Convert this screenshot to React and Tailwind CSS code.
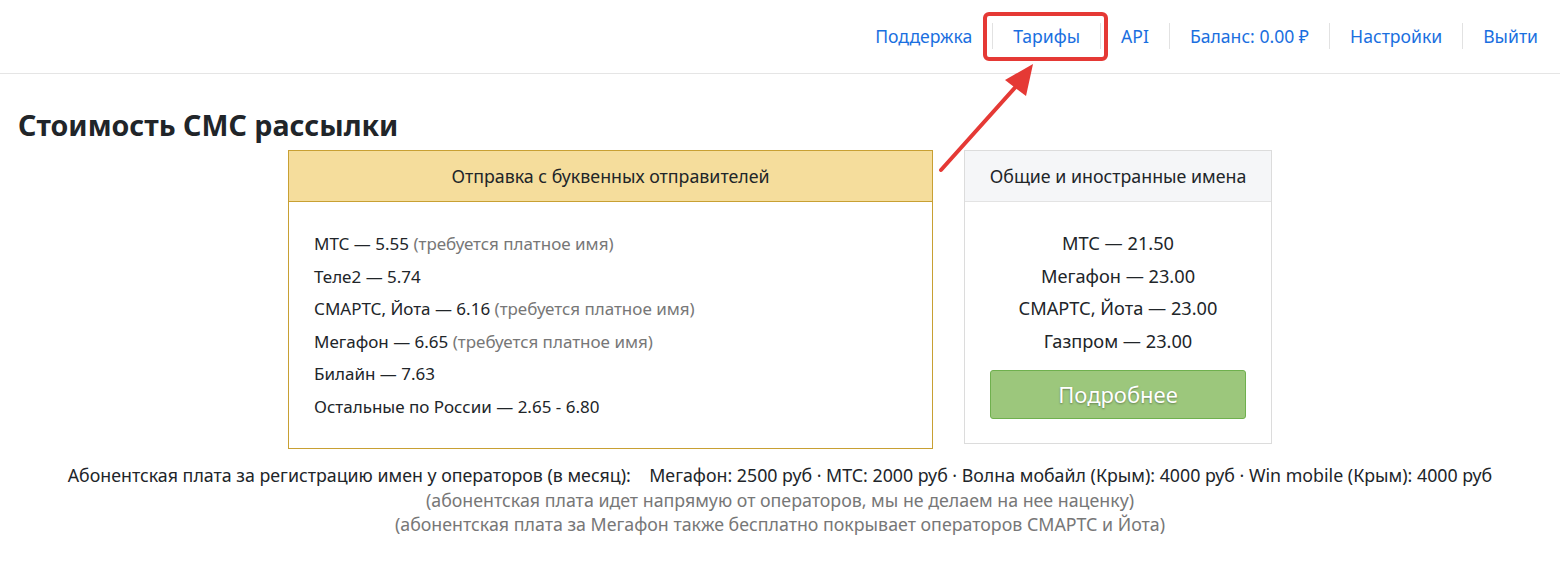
const NAV = ["Поддержка", "Тарифы", "API", "Баланс: 0.00 ₽", "Настройки", "Выйти"];

const LETTER = [
  { name: "МТС — 5.55", note: "(требуется платное имя)" },
  { name: "Теле2 — 5.74" },
  { name: "СМАРТС, Йота — 6.16", note: "(требуется платное имя)" },
  { name: "Мегафон — 6.65", note: "(требуется платное имя)" },
  { name: "Билайн — 7.63" },
  { name: "Остальные по России — 2.65 - 6.80" },
];

const COMMON = ["МТС — 21.50", "Мегафон — 23.00", "СМАРТС, Йота — 23.00", "Газпром — 23.00"];

export default function App() {
  return (
    <div className="relative min-h-[580px] bg-white font-['Noto_Sans',sans-serif] text-[#212529]">
      {/* ── Header ── */}
      <header className="flex h-[74px] items-center justify-end border-b border-[#e5e5e5] pr-[22px]">
        <nav className="flex items-center text-[17.6px] text-[#1a6fe0]">
          {NAV.map((item, i) => (
            <div key={item} className="flex items-center">
              {i > 0 && <span className="mx-[20px] h-[26px] w-px bg-[#e2e2e2]" />}
              {item === "Тарифы" ? (
                <span className="relative">
                  <a href="#" className="hover:underline">{item}</a>
                  <span className="pointer-events-none absolute -top-[11px] -bottom-[11px] -left-[30px] -right-[28px] rounded-[6px] border-[4px] border-[#e53935]" />
                </span>
              ) : (
                <a href="#" className="hover:underline">{item}</a>
              )}
            </div>
          ))}
        </nav>
      </header>

      {/* ── Title ── */}
      <h1 className="ml-[18px] mt-[33px] text-[28.6px] font-bold leading-[36px] text-[#212529]">
        Стоимость СМС рассылки
      </h1>

      {/* ── Cards ── */}
      <div className="mt-[7px] flex items-start justify-center gap-[31px]">
        <div className="w-[645px] border border-[#c8a033]">
          <div className="flex h-[51px] items-center justify-center border-b border-[#c8a033] bg-[#f5dd9c] text-[17.8px]">
            Отправка с буквенных отправителей
          </div>
          <ul className="flex flex-col gap-[6px] px-[25px] pb-[28px] pt-[29px] text-[17px] leading-[26.5px]">
            {LETTER.map((row) => (
              <li key={row.name}>
                {row.name}
                {row.note && <span className="text-[#777]"> {row.note}</span>}
              </li>
            ))}
          </ul>
        </div>

        <div className="w-[308px] border border-[#dcdcdc]">
          <div className="flex h-[51px] items-center justify-center border-b border-[#e3e3e3] bg-[#f5f6f8] text-[17.8px]">
            Общие и иностранные имена
          </div>
          <div className="flex flex-col items-center px-[25px] pb-[24px] pt-[28px]">
            <ul className="flex flex-col items-center gap-[6px] text-[18.2px] leading-[26.5px]">
              {COMMON.map((row) => (
                <li key={row}>{row}</li>
              ))}
            </ul>
            <button className="mt-[16px] flex h-[49px] w-full items-center justify-center rounded-[3px] border border-[#6fb04e] bg-[#9cc77c] text-[22px] text-white [text-shadow:0_1px_2px_rgba(0,0,0,0.35)]">
              Подробнее
            </button>
          </div>
        </div>
      </div>

      {/* ── Footnote ── */}
      <div className="mt-[14px] flex flex-col items-center text-[17.8px] leading-[24.5px]">
        <p>
          Абонентская плата за регистрацию имен у операторов (в месяц):&nbsp;&nbsp;&nbsp; Мегафон: 2500 руб · МТС: 2000 руб · Волна мобайл (Крым): 4000 руб · Win mobile (Крым): 4000 руб
        </p>
        <p className="text-[#777]">(абонентская плата идет напрямую от операторов, мы не делаем на нее наценку)</p>
        <p className="text-[#777]">(абонентская плата за Мегафон также бесплатно покрывает операторов СМАРТС и Йота)</p>
      </div>

      {/* ── Annotation arrow ── */}
      <svg className="pointer-events-none absolute left-[930px] top-[58px]" width="120" height="120" viewBox="0 0 120 120">
        <line x1="11" y1="112" x2="90" y2="24" stroke="#e53935" strokeWidth="4" strokeLinecap="round" />
        <polygon points="103,6 75,22 96,38" fill="#e53935" />
      </svg>
    </div>
  );
}
